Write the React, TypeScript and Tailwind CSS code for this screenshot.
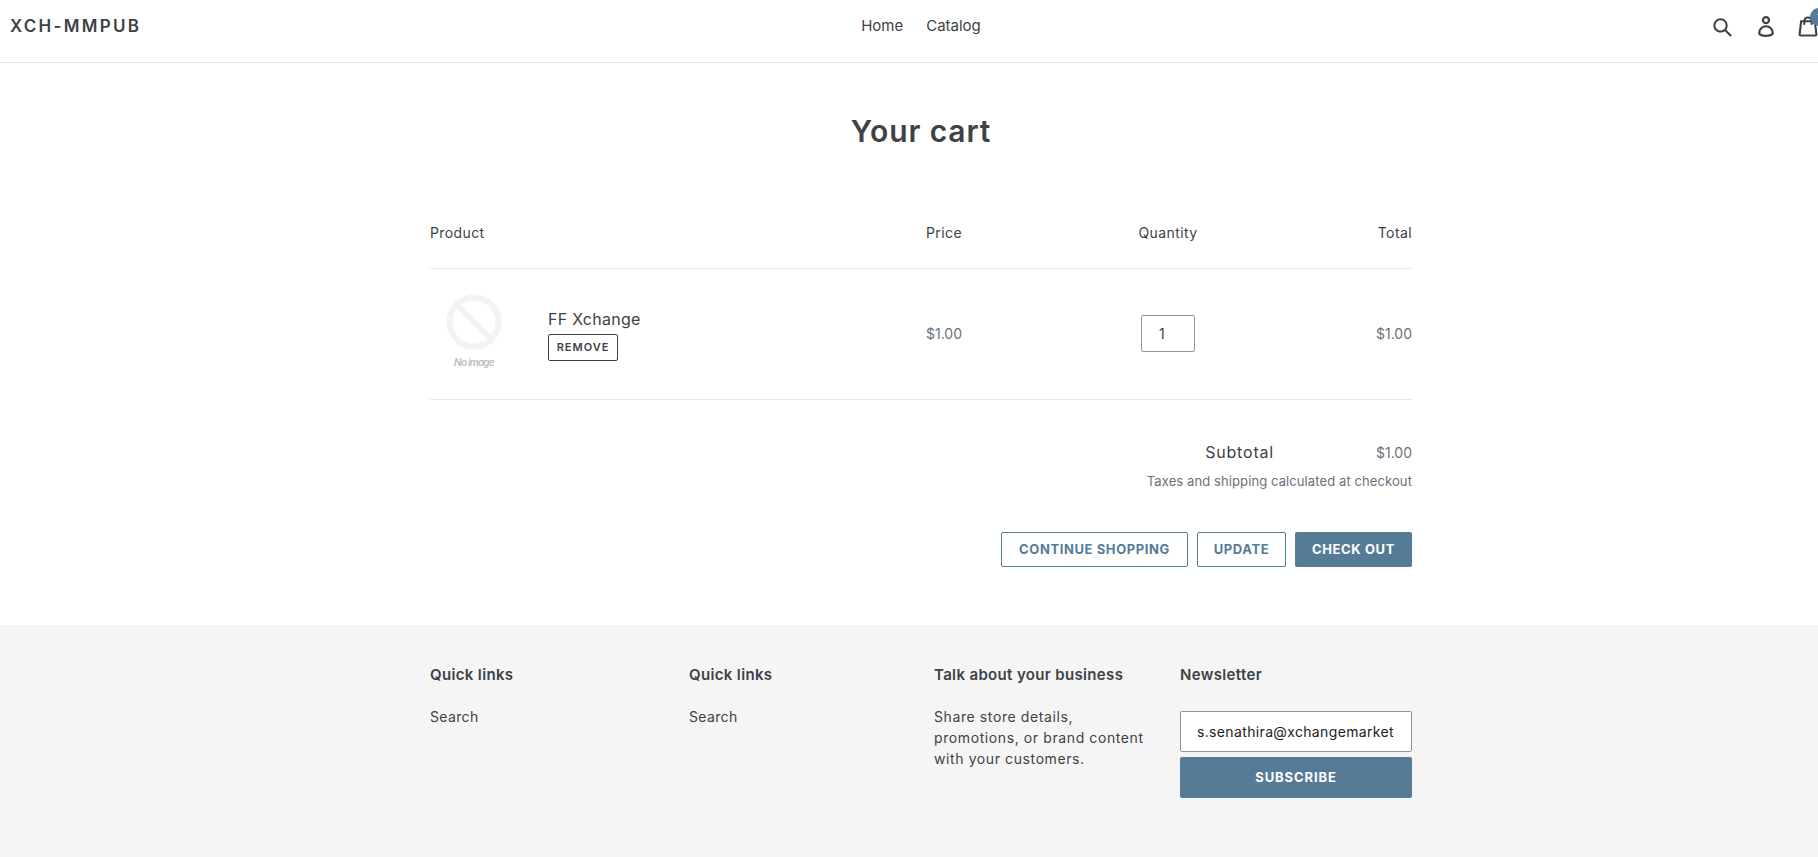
import React from "react";

const SEARCH = "M35.6 36l-9.8-9.8c4.1-5.4 3.6-13.2-1.3-18.1-5.4-5.4-14.2-5.4-19.7 0-5.4 5.4-5.4 14.2 0 19.7 2.6 2.6 6.1 4.1 9.8 4.1 3 0 5.9-1 8.3-2.8l9.8 9.8c.4.4.9.6 1.4.6s1-.2 1.4-.6c.9-.9.9-2.1.1-2.9zm-20.9-8.2c-2.6 0-5.1-1-7-2.9-3.9-3.9-3.9-10.1 0-14C9.6 9 12.2 8 14.7 8s5.1 1 7 2.9c3.9 3.9 3.9 10.1 0 14-1.9 1.9-4.4 2.9-7 2.9z";
const LOGIN = "M14.17 14.9a7.45 7.45 0 1 0-7.5-7.45 7.46 7.46 0 0 0 7.5 7.45zm0-10.91a3.45 3.45 0 1 1-3.5 3.46A3.46 3.46 0 0 1 14.17 4zM14.17 16.47A14.18 14.18 0 0 0 0 30.68c0 1.41.66 4 5.11 5.66a27.17 27.17 0 0 0 9.06 1.34c6.54 0 14.17-1.84 14.17-7a14.18 14.18 0 0 0-14.17-14.21zm0 17.21c-6.3 0-10.17-1.77-10.17-3a10.17 10.17 0 1 1 20.33 0c.01 1.23-3.86 3-10.16 3z";
const CART = "M36.5 34.8L33.3 8h-5.9C26.7 3.9 23 .8 18.5.8S10.3 3.9 9.6 8H3.7L.5 34.8c-.2 1.5.4 2.4.9 3 .5.5 1.4 1.2 3.1 1.2h28c1.3 0 2.4-.4 3.1-1.3.7-.7 1-1.8.9-2.9zm-18-30c2.2 0 4.1 1.4 4.7 3.2h-9.5c.7-1.9 2.6-3.2 4.8-3.2zM4.5 35l2.8-23h2.2v3c0 1.1.9 2 2 2s2-.9 2-2v-3h10v3c0 1.1.9 2 2 2s2-.9 2-2v-3h2.2l2.8 23h-28z";

function Header() {
  return (
    <header className="grid h-[63px] grid-cols-3 items-center border-b border-[#e8e9eb] pr-[24px] pb-[9px] pl-[10px]">
      <a className="text-[17px] font-semibold tracking-[2.3px] text-[#3d4246]">XCH-MMPUB</a>
      <nav className="flex justify-center gap-[23px] pl-[14px] text-[15px] text-[#3d4246]">
        <a>Home</a>
        <a>Catalog</a>
      </nav>
      <div className="flex items-center justify-end text-[#3d4246]">
        <svg viewBox="0 0 37 40" className="h-[21px] w-[19px] fill-current"><path d={SEARCH} /></svg>
        <svg viewBox="0 0 28.33 37.68" className="ml-[26px] h-[21px] w-[16px] fill-current"><path d={LOGIN} /></svg>
        <span className="relative ml-[24px] h-[21px] w-[20px]">
          <svg viewBox="0 0 37 40" className="h-[21px] w-[20px] fill-current"><path d={CART} /></svg>
          <span className="absolute -top-[8px] left-[12px] flex h-[18px] w-[18px] items-center justify-center rounded-full bg-[#557b97] text-[10px] text-white">1</span>
        </span>
      </div>
    </header>
  );
}

function NoImage() {
  return (
    <div className="flex w-[86px] flex-col items-center pb-[6px]">
      <svg viewBox="0 0 56 56" className="h-[56px] w-[56px]">
        <circle cx="28" cy="28" r="24.5" fill="none" stroke="#f3f3f3" strokeWidth="6" />
        <path d="M12 12 L44 44" stroke="#f3f3f3" strokeWidth="6" />
      </svg>
      <span className="mt-[6px] text-[10px] leading-[12px] font-semibold tracking-[-0.8px] text-[#bdbdbd] italic">No image</span>
    </div>
  );
}

function CartTable() {
  return (
    <div className="w-[982px] self-center">
      <div className="flex h-[46px] items-start border-b border-[#e8e9eb] text-[14px] leading-[20px] tracking-[0.4px] text-[#3d4246]">
        <div className="w-[496px]">Product</div>
        <div className="w-[162px]">Price</div>
        <div className="w-[160px] text-center">Quantity</div>
        <div className="flex-1 text-right">Total</div>
      </div>
      <div className="flex h-[131px] items-center border-b border-[#e8e9eb] text-[14px] text-[#3d4246]">
        <div className="flex w-[496px] items-center">
          <div className="ml-[1px] w-[117px]"><NoImage /></div>
          <div>
            <div className="text-[16px] leading-[24px] tracking-[0.25px]">FF Xchange</div>
            <button className="mt-[3px] h-[27px] w-[70px] rounded-[2px] border border-[#3d4246] text-[11px] font-semibold tracking-[1px]">REMOVE</button>
          </div>
        </div>
        <div className="mb-[2px] w-[162px] text-[#69727b]">$1.00</div>
        <div className="mb-[2px] flex w-[160px] justify-center">
          <div className="flex h-[37px] w-[54px] items-center rounded-[2px] border border-[#949494] pl-[17px]">1</div>
        </div>
        <div className="mb-[2px] flex-1 text-right text-[#69727b]">$1.00</div>
      </div>
      <div className="mt-[40px] flex items-center justify-end text-[#3d4246]">
        <span className="text-[16px] leading-[24px] tracking-[0.8px]">Subtotal</span>
        <span className="ml-[102px] text-[14px] text-[#69727b]">$1.00</span>
      </div>
      <p className="mt-[7px] text-right text-[13px] leading-[20px] tracking-[0.1px] text-[#69727b]">Taxes and shipping calculated at checkout</p>
      <div className="mt-[41px] flex justify-end gap-[9px] text-[13px] font-bold tracking-[0.6px]">
        <button className="h-[35px] w-[187px] rounded-[2px] border border-[#557b97] text-[#557b97]">CONTINUE SHOPPING</button>
        <button className="h-[35px] w-[89px] rounded-[2px] border border-[#557b97] text-[#557b97]">UPDATE</button>
        <button className="h-[35px] w-[117px] rounded-[2px] bg-[#557b97] text-white">CHECK OUT</button>
      </div>
    </div>
  );
}

function Footer() {
  return (
    <footer className="flex h-[232px] justify-center bg-[#f5f5f5] pt-[38px] text-[14px] tracking-[0.35px] text-[#3d4246]">
      <div className="flex w-[982px] items-start">
        <div className="w-[259px]">
          <h4 className="text-[15px] leading-[24px] font-semibold">Quick links</h4>
          <p className="mt-[18px] leading-[24px]">Search</p>
        </div>
        <div className="w-[245px]">
          <h4 className="text-[15px] leading-[24px] font-semibold">Quick links</h4>
          <p className="mt-[18px] leading-[24px]">Search</p>
        </div>
        <div className="w-[246px]">
          <h4 className="text-[15px] leading-[24px] font-semibold">Talk about your business</h4>
          <p className="mt-[19px] w-[215px] leading-[21px] tracking-[0.6px]">Share store details, promotions, or brand content with your customers.</p>
        </div>
        <div className="flex-1">
          <h4 className="text-[15px] leading-[24px] font-semibold">Newsletter</h4>
          <div className="mt-[24px] flex h-[41px] items-center overflow-hidden rounded-[2px] border border-[#949494] bg-white pl-[16px] whitespace-nowrap text-[#222]">s.senathira@xchangemarket</div>
          <button className="mt-[5px] h-[41px] w-full rounded-[2px] bg-[#557b97] text-[13px] font-bold tracking-[0.9px] text-white">SUBSCRIBE</button>
        </div>
      </div>
    </footer>
  );
}

export default function App() {
  return (
    <div className="h-[857px] overflow-hidden bg-white">
      {/* page is 24px wider than the window in the shot, cart icon gets clipped */}
      <div className="flex h-[857px] w-[1842px] flex-col font-['Inter',sans-serif]">
        <Header />
        <main className="flex h-[562px] flex-col">
          <h1 className="mt-[49px] text-center text-[30px] leading-[38px] font-semibold tracking-[0.9px] text-[#3d4246]">Your cart</h1>
          <div className="mt-[73px] flex flex-col"><CartTable /></div>
        </main>
        <Footer />
      </div>
    </div>
  );
}
